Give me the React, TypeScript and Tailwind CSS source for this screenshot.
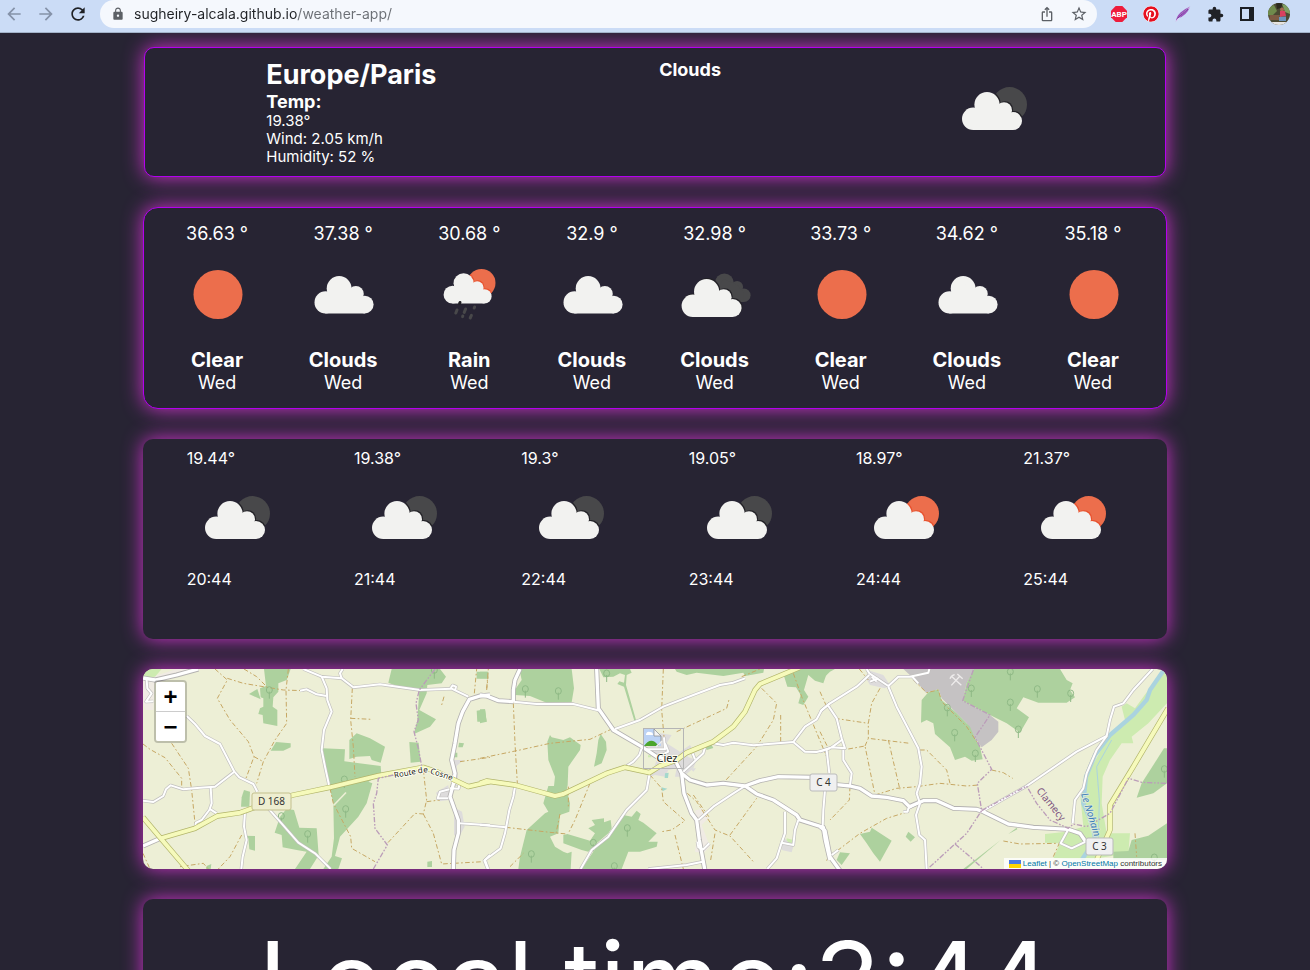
import { type ReactNode } from "react";
import {
  MdArrowBack,
  MdArrowForward,
  MdExtension,
  MdIosShare,
  MdLock,
  MdRefresh,
  MdStarBorder,
} from "react-icons/md";
import { FaPinterest } from "react-icons/fa";

/* ---------- Weather drawings ---------- */

type Sky = "clear" | "few" | "rain" | "broken" | "night" | "day";

function Cloud({ fill = "#f2f2f0" }: { fill?: string }) {
  return (
    <g fill={fill}>
      <circle cx="11.2" cy="26.8" r="11.2" />
      <circle cx="25" cy="12.6" r="12.6" />
      <circle cx="42" cy="18.2" r="8" />
      <circle cx="51" cy="29" r="9" />
      <path d="M11 20 L25 8 L42 15 L51 26 V38 H11Z" />
    </g>
  );
}

function SkyIcon({ sky }: { sky: Sky }) {
  return (
    <svg viewBox="0 0 100 100" className="size-[100px] shrink-0" role="img" aria-label={sky}>
      {sky === "clear" && <circle cx="51" cy="49.5" r="24.5" fill="#ec6e4c" />}
      {sky === "few" && (
        <g transform="translate(21.5 31) scale(.985)">
          <Cloud />
        </g>
      )}
      {(sky === "night" || sky === "day") && (
        <>
          <clipPath id="disc-large">
            <circle cx="65.6" cy="45.5" r="17.4" />
          </clipPath>
          <g clipPath="url(#disc-large)">
            <rect width="100" height="100" fill={sky === "day" ? "#ec6e4c" : "#48484a"} />
            <g transform="translate(19 32)">
              <Cloud fill={sky === "day" ? "#e8502c" : "#222126"} />
            </g>
          </g>
          <g transform="translate(18 33)">
            <Cloud />
          </g>
        </>
      )}
      {sky === "broken" && (
        <>
          <g transform="translate(40.6 28.4) scale(.75)">
            <Cloud fill="#48484a" />
          </g>
          <g transform="translate(17.6 33)">
            <Cloud fill="#222126" />
          </g>
          <path d="M60 56 H74 V74 H60Z" fill="#272433" />
          <g transform="translate(16.6 34)">
            <Cloud />
          </g>
        </>
      )}
      {sky === "rain" && (
        <>
          <clipPath id="disc-small">
            <circle cx="62.5" cy="38" r="14" />
          </clipPath>
          <g clipPath="url(#disc-small)">
            <rect width="100" height="100" fill="#ec6e4c" />
            <g transform="translate(25.4 27.2) scale(.8)">
              <Cloud fill="#e8502c" />
            </g>
          </g>
          <g transform="translate(24.6 28.2) scale(.8)">
            <Cloud />
          </g>
          <g stroke="#48484a" strokeWidth="3" strokeLinecap="round">
            <path d="M41 57.5 L40.6 58.5" stroke="#222126" />
            <path d="M38 65 L36.8 68" />
            <path d="M46.6 64 L45.2 67.4" />
            <path d="M55.6 62 L55.2 63" />
            <path d="M43.8 71 L43.6 71.6" />
            <path d="M52.4 70.4 L51.2 73" />
          </g>
        </>
      )}
    </svg>
  );
}

/* ---------- Map ---------- */

interface Sheet {
  at: string;
  fields: string[];
  grey: string[];
  beige: string[];
  woods: string[];
  tracks: string[];
  lanes: string[];
  roads: string[];
  yellow: string[];
  borders: string[];
  trees: [number, number][];
}

const sheets: Sheet[] = [
  {
    at: "translate(-3 -9) scale(.33333)",
    fields: ["M9 27 L65 27 L45 50 L9 54Z", "M428 30 H445 V50 H428Z"],
    grey: [
      "M888 398 L925 375 L928 420 L898 424Z",
      "M942 442 L966 455 L974 500 L955 534 L942 524Z",
      "M940 300 L970 300 L950 318 L955 370 L935 370Z",
    ],
    beige: ["M9 60 L110 27 L180 27 L110 52 L44 70 L42 110 L40 150 L18 150 L9 130Z"],
    woods: [
      "M372 27 L452 27 L440 60 L415 70 L415 95 L400 112 L398 140 L412 150 L412 198 L370 190 L368 165 L355 162 L360 145 L370 140 L370 115 L362 112 L360 85 L378 78Z",
      "M327 102 L352 87 L362 118Z",
      "M755 27 H900 L918 50 L905 70 L862 75 L860 100 L838 150 L888 178 L870 200 L822 222 L832 180 L838 90 L780 82 L745 68Z",
      "M392 272 L408 246 L452 250 L452 262 L430 272Z",
      "M548 265 L615 268 L613 304 L722 318 L724 345 L685 365 L697 370 L680 430 L655 470 L600 530 L585 588 L606 595 L595 627 L550 627 L575 590 L582 535 L580 430 L568 378Z",
      "M628 240 L650 220 L690 235 L735 260 L722 308 L695 300 L690 288 L650 290 L628 297Z",
      "M808 246 L836 248 L842 305 L812 308Z",
      "M312 390 L330 395 L328 440 L303 440 L305 412Z",
      "M404 518 L420 470 L440 446 L462 450 L478 503 L530 505 L536 586 L510 627 L465 627 L500 575 L470 570 L428 562 L425 525Z",
      "M310 527 L345 528 L345 572 L328 568 L325 535Z",
      "M1010 152 L1035 148 L1040 185 L1012 185Z",
      "M1010 35 H1045 V56 H1010Z",
      "M957 248 L972 250 L968 262 L955 262Z",
      "M940 278h12v14h-12Z",
      "M862 605l14 -2v18h-14Z",
      "M200 618 L214 612 L212 627 H198Z",
    ],
    tracks: [
      "M225 27 L262 60 L232 115 L270 180 L325 245 L342 290 L318 355",
      "M262 55 L310 70 L370 80 L430 90 L490 92",
      "M312 27 L350 50 L385 85",
      "M445 27 L438 90 L440 190 L405 240 L370 305 L350 370",
      "M342 290 L370 305",
      "M637 85 L632 180 L640 260 L645 350",
      "M632 175 L695 178",
      "M95 250 L145 325 L155 390 L165 490",
      "M9 252 L30 268 L75 293 L125 355 L125 385",
      "M570 385 L580 430 L632 530 L635 565 L705 605",
      "M850 330 L860 420 L850 462 L825 460 L742 550",
      "M850 462 L880 520 L905 612 L1030 605",
      "M960 305 L1050 292",
      "M860 425 L900 420",
      "M9 580 L30 627",
      "M305 525 L270 590 L235 627",
      "M120 620 L190 610 L205 627",
      "M1003 100 L1010 27",
      "M1040 90 L1044 50",
      "M912 110 L905 135",
    ],
    lanes: [
      "M140 168 L165 192 L195 228 L240 252 L283 335 L298 352 L340 372 L352 395",
      "M9 422 L40 426 L70 408 L78 388 L92 376 L130 388 L180 383 L225 380 L283 335",
      "M212 383 L215 430 L208 450 L185 480 L168 488 L166 500",
      "M208 446 L230 460",
      "M490 27 L545 50 L605 55 L640 82 L720 73 L840 90 L935 86 L985 110",
      "M605 55 L600 40 L608 27",
      "M545 50 L560 85 L562 120 L575 155 L552 210 L545 270 L555 320 L567 375",
      "M480 92 L500 88 L530 103 L560 108",
      "M932 84 L938 76 L948 80 L945 92",
      "M385 445 L420 485 L475 548 L525 580 L572 627",
      "M315 456 L312 500 L320 540 L308 590 L304 627",
      "M20 60 L22 85 L35 100 L18 125 L40 124",
      "M958 490 L1050 496",
      "M935 365 L958 374 L956 386 L930 385",
      "M928 388 L900 395 L893 415 L925 415",
      "M1050 585 L1033 602 L1043 627",
    ],
    roads: [
      "M1050 105 L1020 108 L988 118 L968 155 L955 190 L945 250 L935 300 L945 340 L942 365 L930 410 L955 480 L955 520 L942 570 L940 627",
      "M9 558 L62 535",
      "M9 54 L45 60 L110 45 L175 27",
    ],
    yellow: [
      "M9 472 L62 535 L145 632",
      "M62 535 L165 505 L232 468 L300 458 L400 422 L460 405 L570 382 L715 347 L850 322 L890 335 L985 380 L1050 365",
    ],
    borders: [
      "M885 27 L838 90 L828 130 L835 180 L822 215 L835 265 L845 318",
      "M760 345 L715 355 L710 400 L700 430 L705 505 L742 555 L700 627",
    ],
    trees: [[388, 90], [613, 358], [617, 447], [424, 468], [503, 522], [883, 30]],
  },
  {
    at: "translate(337 -9) scale(.33333)",
    fields: ["M920 535 L940 540 L936 556 L918 550Z", "M504 286 h10 v6 h-10Z"],
    grey: [
      "M500 262 L535 250 L540 220 L575 225 L560 250 L600 275 L630 255 L637 266 L622 290 L650 300 L640 325 L610 350 L585 350 L590 325 L565 330 L555 350 L525 345 L500 355 L520 330 L530 300Z",
      "M908 520 L918 540 L940 560 L935 577 L905 570Z",
      "M630 325 L648 325 L640 335Z",
    ],
    beige: ["M645 452 L665 445 L685 475 L665 495 L690 560 L670 580 L645 575 L655 500Z"],
    woods: [
      "M118 27 H275 L282 85 L275 127 L200 128 L150 108 L105 105 L108 85 L125 60Z",
      "M358 27 L450 27 L455 38 L440 45 L438 75 L468 180 L463 182 L432 80 L412 72 L418 64 L432 68 L435 45 L420 40 L400 50 L370 52Z",
      "M0 35h22v20h-22Z",
      "M0 148 L15 148 L20 185 L0 190Z",
      "M585 27 L590 35 L620 45 L650 38 L730 48 L790 38 L795 48 L850 38 L852 27Z",
      "M930 27 L1045 27 L1030 70 L1005 62 L985 45 L972 90 L985 110 L970 135 L955 130 L962 105 L948 82 L922 80 L912 48Z",
      "M210 225 L215 232 L250 240 L270 232 L302 255 L300 270 L265 320 L263 375 L260 390 L270 430 L268 455 L240 465 L235 520 L210 530 L225 560 L250 575 L262 580 L275 575 L272 627 L115 627 L120 590 L140 510 L195 460 L205 455 L190 430 L205 378 L222 378 L225 350 L205 300 L202 245Z",
      "M362 222 L378 245 L380 270 L365 310 L342 320 L350 280 L355 240Z",
      "M250 525 L262 522 L330 542 L345 520 L325 505 L345 495 L335 480 L372 475 L372 487 L392 480 L395 505 L385 520 L350 550 L325 575 L305 570 L250 550Z",
      "M400 500 L430 465 L455 470 L470 452 L482 462 L475 480 L490 488 L530 520 L505 545 L533 545 L530 560 L480 575 L445 575 L425 627 L305 627 L350 560 L390 525Z",
      "M675 258 L695 255 L700 264 L680 270Z",
    ],
    tracks: [
      "M100 130 L105 250 L112 370",
      "M0 295 L120 270 L210 250 L330 238 L395 207",
      "M550 27 L545 150 L552 230",
      "M590 215 L740 145 L748 115",
      "M330 370 L285 480 L265 520",
      "M78 502 L210 517 L260 522",
      "M510 345 L545 385 L550 425 L615 482 L575 510 L545 515",
      "M622 400 L650 425 L705 510 L750 528 L820 605",
      "M640 405 L690 475",
      "M750 525 L830 415",
      "M845 85 L890 130 L880 180 L830 260 L738 360",
      "M902 165 V245",
      "M940 40 L965 110 L1040 290",
      "M20 85 L25 27",
      "M265 380 L265 440",
      "M240 462 L228 520",
      "M585 525 L610 627",
      "M692 600 L705 520",
      "M785 50 L840 27",
      "M90 620 L130 580",
    ],
    lanes: [
      "M100 125 L170 132 L280 132 L360 152",
      "M405 207 L480 180 L550 140 L640 105 L720 75 L760 68 L795 55",
      "M105 380 L100 410 L88 450 L75 520 L62 565 L15 600 L25 627",
      "M0 494 L78 502",
      "M485 265 L478 285 L460 305 L440 318",
      "M508 345 L500 390 L440 450 L385 530 L335 570 L302 627",
      "M795 378 L760 400 L700 440 L655 480",
      "M700 250 L730 255 L760 248 L820 256 L940 246 L975 275 L1010 276 L1050 265",
      "M940 246 L975 200 L1010 178 L1025 150 L1050 130",
      "M915 455 L915 520 L905 548 L940 555 L945 510 L955 480",
      "M905 548 L890 595 L862 627",
      "M505 627 L620 615 L668 605",
      "M652 545 L655 562 L670 568 L688 550",
      "M675 262 L670 280 L610 335",
      "M638 280 L645 298",
      "M500 268 L555 268 L552 232",
      "M535 290 L565 275 L555 250",
    ],
    roads: [
      "M0 105 L20 108 L55 122 L100 125",
      "M100 125 L100 90 L105 60 L120 27",
      "M350 27 L355 145 L400 210 L485 260 L530 290 L585 305",
      "M605 340 L630 360 L680 375 L730 370 L795 378 L840 362 L895 350 L1000 352",
      "M795 378 L830 402 L880 420 L950 465 L960 480 L1030 502 L1036 540 L1050 600",
      "M585 300 L605 340 L612 400 L635 460 L650 480 L658 540 L675 632",
    ],
    yellow: [
      "M0 370 L20 363 L105 375 L225 408 L250 402 L380 340 L435 322 L508 338 L540 318 L590 300 L620 278 L700 245 L760 200 L795 155 L825 90 L840 72 L960 22",
    ],
    borders: [],
    trees: [[136, 87], [235, 93], [380, 40], [442, 504], [340, 548], [154, 582], [403, 618]],
  },
  {
    at: "translate(677 -9) scale(.33333)",
    fields: [
      "M1041 27 L1041 130 L985 190 L935 230 L940 250 L905 250 L870 300 L848 350 L845 430 L860 520 L930 520 L925 580 L800 600 L700 595 L720 550 L675 548 L675 522 L740 515 L790 500 L780 400 L815 320 L860 240 L915 180 L905 140 L920 130 L945 145 L1000 70 L1030 27Z",
    ],
    grey: ["M135 50 L150 32 L190 45 L210 75 L195 85 L150 75Z"],
    beige: [],
    woods: [
      "M0 27 H45 L30 35 L10 55 L0 62Z",
      "M462 27 L720 27 L740 60 L758 70 L750 90 L765 112 L740 128 L655 128 L610 112 L590 145 L627 172 L600 218 L560 190 L510 165 L428 122 L440 70Z",
      "M325 97 L355 88 L365 120 L410 160 L450 200 L465 235 L480 260 L488 298 L455 302 L435 290 L405 300 L390 262 L345 222 L340 190 L320 180 L303 188 L305 120Z",
      "M120 522 L150 515 L155 503 L215 542 L180 605 L160 580 L140 550Z",
      "M265 515 L285 532 L272 545 L257 530Z",
      "M60 577 L90 580 L65 615 L50 600Z",
      "M1032 265 L1041 265 L1041 370 L1000 400 L950 413 L965 370Z",
      "M935 540 L985 527 L1041 490 L1041 600 L880 598 L880 575 L925 573Z",
      "M565 522 L590 503 L592 508Z",
      "M430 627 L542 540 L440 627Z",
    ],
    tracks: [
      "M180 85 L155 130 L145 190 L145 235 L270 250",
      "M45 175 L145 190",
      "M85 267 L135 258 L165 405",
      "M135 258 L145 235",
      "M205 240 L240 390",
      "M165 405 L230 385 L290 380 L360 370 L440 378 L475 375",
      "M300 270 L320 270 L380 330 L390 370",
      "M515 330 L550 338 L578 355",
      "M90 380 L88 420 L30 480",
      "M265 455 L200 475 L120 520 L35 585 L15 605",
      "M550 543 L600 552 L715 550",
      "M118 27 L145 60",
      "M280 60 L320 98 L355 90 L365 125 L440 200 L470 245",
      "M945 520 L950 590",
      "M0 95 L20 140",
      "M0 215 L25 265",
      "M700 590 L720 545",
    ],
    lanes: [
      "M0 155 L30 130 L110 80 L148 45",
      "M140 27 L148 40 L205 78 L235 50 L270 50 L325 38 L328 27",
      "M150 65 L175 55 M155 50 L170 65",
      "M205 80 L230 140 L295 265 L305 320 L300 370 L290 400 L300 430 L288 465 L298 525 L315 540 L320 627",
      "M275 48 L295 70",
      "M25 138 L50 175 L65 235 L75 265 L35 262 L0 275",
      "M65 240 L35 262",
      "M70 270 L70 300 L95 340 L90 375",
      "M20 270 L28 340",
      "M15 390 L10 450 L8 500",
      "M490 452 L620 378 L770 275 L860 228 L870 180 L882 140 L910 130 L940 90 L998 27",
      "M860 228 L830 270 L800 340 L790 385 L765 420 L758 490",
      "M745 508 L722 550 L755 565 L797 545",
      "M300 425 L265 445 L263 455 L250 455",
      "M55 570 L35 585",
    ],
    roads: [
      "M50 374 L90 378 L120 385 L155 408 L200 412 L250 422 L268 440 L310 422 L350 422 L400 445 L470 448 L490 455 L565 492 L640 502 L745 508 L780 520 L797 545",
      "M0 500 L15 512 L30 590 L60 632",
    ],
    yellow: ["M1044 145 L940 320 L870 435 L870 510 L830 600"],
    borders: [
      "M460 30 L428 122 L510 165 L465 232 L515 328 L472 370 L485 452 L440 520 L405 552 L325 625",
      "M405 552 L450 590 L490 627",
      "M485 452 L620 378 L650 430 L690 480 L745 505 L760 492 L800 500 L870 460 L925 355 L965 367 L1041 370",
    ],
    trees: [
      [454, 85], [571, 127], [652, 87], [571, 35], [404, 218], [466, 280],
      [382, 143], [1033, 327], [1003, 592], [595, 208], [752, 100],
    ],
  },
];

type Layer = "fields" | "grey" | "beige" | "woods" | "tracks" | "lanes" | "roads" | "yellow" | "borders";

function Areas({ layer, fill }: { layer: Layer; fill: string }) {
  return (
    <>
      {sheets.map((s) => (
        <g key={s.at} transform={s.at} fill={fill}>
          {s[layer].map((d) => (
            <path key={d} d={d} />
          ))}
        </g>
      ))}
    </>
  );
}

function Lines({ layer, color, width, dash }: { layer: Layer; color: string; width: number; dash?: string }) {
  return (
    <>
      {sheets.map((s) => (
        <g key={s.at} transform={s.at} fill="none" stroke={color} strokeWidth={width} strokeLinejoin="round" strokeDasharray={dash}>
          {s[layer].map((d) => (
            <path key={d} d={d} />
          ))}
        </g>
      ))}
    </>
  );
}

function Shield({ x, y, w, label, fill, stroke }: { x: number; y: number; w: number; label: string; fill: string; stroke: string }) {
  return (
    <g>
      <rect x={x} y={y} width={w} height="17" rx="2" fill={fill} stroke={stroke} />
      <text x={x + w / 2} y={y + 12} textAnchor="middle" fontSize="10" fill="#333">
        {label}
      </text>
    </g>
  );
}

function MapDrawing() {
  return (
    <svg
      viewBox="0 0 1024 200"
      preserveAspectRatio="xMidYMid slice"
      className="block h-[200px] w-full font-['Noto_Sans',sans-serif]"
      role="img"
      aria-label="Map of Ciez"
    >
      <rect width="1024" height="200" fill="#edefd6" />
      <Areas layer="beige" fill="#f0ebe4" />
      <Areas layer="fields" fill="#cdebb0" />
      <Areas layer="grey" fill="#dedcdc" />
      <path
        transform="translate(677 -9) scale(.33333)"
        d="M250 27 H465 L440 70 L428 122 L510 165 L535 185 L535 215 L515 240 L485 262 L465 235 L440 190 L400 150 L365 115 L355 88 L318 98 L280 55Z"
        fill="#c5c2c3"
      />
      <Areas layer="woods" fill="#add19e" />
      <g transform="translate(677 -9) scale(.33333)" fill="none" stroke="#aad3df">
        <path d="M1030 32 L990 90 L980 120 L940 165 L870 225 L825 285 L798 350 L790 430 L820 500 L825 540 L785 600" strokeWidth="13" />
        <path d="M875 240 L830 320 L838 420 L835 540" strokeWidth="3" />
      </g>
      <g transform="translate(337 -9) scale(.33333)" fill="#a4d8cc">
        <path d="M555 340 L566 338 L564 354 L554 354Z" />
        <path d="M544 382 L562 386 L548 394Z" />
      </g>
      <Lines layer="tracks" color="#c6a763" width={3} dash="14 7 5 7" />
      {sheets.map((s) => (
        <g key={s.at} transform={s.at} fill="none" stroke="#8fb986" strokeWidth="3">
          {s.trees.map(([x, y]) => (
            <g key={`${x}-${y}`}>
              <ellipse cx={x} cy={y} rx="9" ry="10" />
              <path d={`M${x} ${y + 5}v21`} />
            </g>
          ))}
        </g>
      ))}
      <g transform="translate(677 -9) scale(.33333)" stroke="#eeecec" strokeWidth="4" fill="none">
        <path d="M394 76 L420 48 M396 50 L424 76 M412 42 L428 56 M390 56 Q394 46 404 44" />
      </g>
      <path d="M190.5 136.5 L203 123.5" stroke="#edefd6" strokeWidth="1.6" />
      <Lines layer="lanes" color="#c2c0bf" width={10} />
      <Lines layer="roads" color="#b4b2b1" width={15} />
      <Lines layer="lanes" color="#ffffff" width={6} />
      <Lines layer="roads" color="#ffffff" width={10} />
      <Lines layer="yellow" color="#b2b56b" width={16} />
      <Lines layer="yellow" color="#f6fabb" width={12} />
      <Lines layer="borders" color="#bb9db9" width={4} dash="16 5 5 5 5 5" />

      <path id="route" d="M251.5 109 L280 103.5 Q283 103 286 104 L310 112" fill="none" />
      <g fill="#222" stroke="#fdfdf0" strokeWidth="2" paintOrder="stroke" strokeLinejoin="round">
        <text fontSize="8">
          <textPath href="#route">Route de Cosne</textPath>
        </text>
        <text x="524" y="93" textAnchor="middle" fontSize="11">
          Ciez
        </text>
        <text transform="translate(893 122) rotate(51)" fontSize="10" fill="#7d5580" stroke="#edefd6">
          Clamecy
        </text>
        <text transform="translate(938 125) rotate(73)" fontSize="10" fontStyle="italic" fill="#3b7cba" stroke="#dcebd8">
          Le Nohain
        </text>
      </g>
      <Shield x={109} y={124} w={39} label="D 168" fill="#eeeed0" stroke="#c3c08d" />
      <Shield x={667} y={105} w={27} label="C 4" fill="#f0f0f0" stroke="#bbb" />
      <Shield x={943} y={169} w={27} label="C 3" fill="#f0f0f0" stroke="#bbb" />

      <g>
        <rect x="500.5" y="59.5" width="40" height="40" fill="none" stroke="#b5b5b5" />
        <path d="M501 60 H511 L518 67 V77 H501Z" fill="#bcd3f5" />
        <path d="M503 65 q1 -3 4 -2 q3 0 3 3 h-7Z" fill="#fff" />
        <path d="M501 77 Q508 67 515 76 L516 77Z" fill="#4ba52c" />
        <path d="M518 67 V73 L513 77" fill="none" stroke="#8b8b8b" strokeWidth=".8" />
        <path d="M511 60 L518 67 H511Z" fill="#f4f4f4" stroke="#8b8b8b" strokeWidth=".7" />
        <path d="M513 78 L519 72" stroke="#eee" strokeWidth="1.5" />
      </g>
    </svg>
  );
}

/* ---------- Browser toolbar ---------- */

function ToolButton({ label, children }: { label: string; children: ReactNode }) {
  return (
    <button type="button" aria-label={label} className="flex w-8 items-center justify-center">
      {children}
    </button>
  );
}

function Toolbar() {
  return (
    <header className="relative z-10 flex h-[33px] shrink-0 items-start border-b border-[#a3b3c9] bg-[#cbdcf6] pr-[15px]">
      <nav className="-ml-0.5 flex h-7 w-[102px] shrink-0 items-center text-lg text-[#8592a8]">
        <ToolButton label="Back">
          <MdArrowBack className="size-5" />
        </ToolButton>
        <ToolButton label="Forward">
          <MdArrowForward className="size-5" />
        </ToolButton>
        <ToolButton label="Reload">
          <MdRefresh className="size-5 text-[#1f2125]" />
        </ToolButton>
      </nav>
      <div className="flex h-7 min-w-0 flex-1 items-center rounded-full bg-[#f5f8fd] pr-0.5 pl-[11px] text-[#5c6066]">
        <MdLock className="mr-[9px] size-3.5 shrink-0" />
        <input
          aria-label="Address"
          defaultValue="sugheiry-alcala.github.io/weather-app/"
          className="min-w-0 flex-1 bg-linear-[90deg,#202226_163px,#6b6f75_163px] bg-clip-text font-['Inter',sans-serif] text-sm text-transparent outline-none"
        />
        <ToolButton label="Share">
          <MdIosShare className="size-4" />
        </ToolButton>
        <ToolButton label="Bookmark this page">
          <MdStarBorder className="size-[18px]" />
        </ToolButton>
      </div>
      <div className="ml-1.5 flex h-7 shrink-0 items-center">
        <ToolButton label="Adblock Plus">
          <svg viewBox="0 0 16 16" className="size-4">
            <path d="M4.7 0 H11.3 L16 4.7 V11.3 L11.3 16 H4.7 L0 11.3 V4.7Z" fill="#ee1c3c" />
            <text x="8" y="10.9" textAnchor="middle" fontSize="8" fontWeight="700" fill="#fff" className="font-['Roboto',sans-serif]">
              ABP
            </text>
          </svg>
        </ToolButton>
        <ToolButton label="Pinterest">
          <FaPinterest className="size-4 rounded-full bg-white text-[#e60f1e]" />
        </ToolButton>
        <ToolButton label="Feather">
          <svg viewBox="0 0 16 16" className="size-4">
            <path d="M.8 15.5 Q1.4 10.5 5.5 6.5 Q9.5 3 15.2 .6 Q13.6 5 10.3 8 Q7 11.4 3 12.2Z" fill="#9a55bb" />
            <path d="M1 15.5 Q5 8 15 1" fill="none" stroke="#e4cbf0" strokeWidth=".8" />
            <path d="M2.5 12.5 Q7 7.5 13 3" fill="none" stroke="#6b2f91" strokeWidth=".8" />
          </svg>
        </ToolButton>
        <ToolButton label="Extensions">
          <MdExtension className="size-[17px] text-[#202226]" />
        </ToolButton>
        <ToolButton label="Side panel">
          <svg viewBox="0 0 14 14" className="size-3.5">
            <path fillRule="evenodd" d="M0 0 H14 V14 H0Z M2 2 V12 H9 V2Z" fill="#1c1f24" />
          </svg>
        </ToolButton>
        <ToolButton label="Profile">
          <svg viewBox="0 0 22 22" className="size-[22px]">
            <clipPath id="face">
              <circle cx="11" cy="11" r="11" />
            </clipPath>
            <g clipPath="url(#face)">
              <rect width="22" height="22" fill="#4b4a33" />
              <path d="M0 4 L6 2 L9 8 L4 13 L0 12Z" fill="#6f8b4c" />
              <path d="M8 0 L15 0 L13 5 L9 6Z" fill="#2c2a1d" />
              <path d="M14 1 L22 3 V11 L17 9Z" fill="#7f9f62" />
              <path d="M2 12 H12 L11 17 H1Z" fill="#7d5b43" />
              <circle cx="14" cy="6.5" r="2" fill="#a56a52" />
              <path d="M12 8 L17 8 L18 13 L12 14Z" fill="#d8405f" />
              <path d="M11 14 L18 13.5 L18 18 L11 18Z" fill="#6c93bd" />
              <path d="M0 19 H22 V22 H0Z" fill="#e6e4e2" />
            </g>
          </svg>
        </ToolButton>
      </div>
    </header>
  );
}

/* ---------- Page ---------- */

const daily: { temp: string; sky: Sky; name: string; grow: string }[] = [
  { temp: "36.63 °", sky: "clear", name: "Clear", grow: "flex-[126_1_0%]" },
  { temp: "37.38 °", sky: "few", name: "Clouds", grow: "flex-[126_1_0%]" },
  { temp: "30.68 °", sky: "rain", name: "Rain", grow: "flex-[126_1_0%]" },
  { temp: "32.9 °", sky: "few", name: "Clouds", grow: "flex-[119_1_0%]" },
  { temp: "32.98 °", sky: "broken", name: "Clouds", grow: "flex-[126_1_0%]" },
  { temp: "33.73 °", sky: "clear", name: "Clear", grow: "flex-[126_1_0%]" },
  { temp: "34.62 °", sky: "few", name: "Clouds", grow: "flex-[126_1_0%]" },
  { temp: "35.18 °", sky: "clear", name: "Clear", grow: "flex-[126_1_0%]" },
];

const hourly: { temp: string; sky: Sky; time: string }[] = [
  { temp: "19.44°", sky: "night", time: "20:44" },
  { temp: "19.38°", sky: "night", time: "21:44" },
  { temp: "19.3°", sky: "night", time: "22:44" },
  { temp: "19.05°", sky: "night", time: "23:44" },
  { temp: "18.97°", sky: "day", time: "24:44" },
  { temp: "21.37°", sky: "day", time: "25:44" },
];

export default function App() {
  return (
    <div className="flex h-screen flex-col bg-[#272433] font-['Inter',sans-serif] text-white">
      <Toolbar />
      <main className="flex min-h-0 flex-1 flex-col items-center gap-[30px] overflow-y-auto px-4 pt-3.5 pb-8 [scrollbar-width:none]">
        <section className="flex min-h-[130px] w-full max-w-[1022px] shrink-0 items-start justify-around rounded-[10px] border border-[#b400f0] bg-[#272433] px-2.5 pt-[11px] shadow-[0_0_20px_#cf32cd]">
          <div className="text-[15px] leading-[18px]">
            <h1 className="text-[27px] leading-8 font-bold">Europe/Paris</h1>
            <h2 className="text-lg leading-[21px] font-bold">Temp:</h2>
            <p>19.38°</p>
            <p>Wind: 2.05 km/h</p>
            <p>Humidity: 52 %</p>
          </div>
          <h2 className="text-lg leading-[22px] font-bold">Clouds</h2>
          <SkyIcon sky="night" />
        </section>

        <section className="flex min-h-[202px] w-full max-w-[1024px] shrink-0 rounded-[15px] border border-[#b400f0] bg-[#272433] px-2.5 pt-[15px] shadow-[0_0_20px_#cf32cd]">
          {daily.map((d) => (
            <article key={d.temp} className={`flex flex-col items-center text-lg leading-[22px] ${d.grow}`}>
              <p>{d.temp}</p>
              <SkyIcon sky={d.sky} />
              <h3 className="mt-1 text-xl leading-[23px] font-bold">{d.name}</h3>
              <p>Wed</p>
            </article>
          ))}
        </section>

        <section className="grid min-h-[200px] w-full max-w-[1024px] shrink-0 grid-cols-6 justify-items-center rounded-[10px] bg-[#272433] px-2.5 pt-2.5 shadow-[0_0_20px_#cf32cd]">
          {hourly.map((h) => (
            <article key={h.time} className="text-base leading-[19px]">
              <p>{h.temp}</p>
              <SkyIcon sky={h.sky} />
              <p className="mt-0.5">{h.time}</p>
            </article>
          ))}
        </section>

        <section className="w-full max-w-[1024px] shrink-0 rounded-[10px] shadow-[0_0_20px_#cf32cd]">
          <div className="relative overflow-hidden rounded-[10px]">
            <MapDrawing />
            <div className="absolute top-[11px] left-[11px] flex w-[33px] flex-col overflow-hidden rounded border-2 border-black/20 bg-clip-padding font-['Liberation_Sans',sans-serif] text-2xl font-bold text-black">
              <button type="button" aria-label="Zoom in" className="h-[30px] border-b border-[#ccc] bg-white leading-[30px]">
                +
              </button>
              <button type="button" aria-label="Zoom out" className="h-[29px] bg-white leading-[30px]">
                −
              </button>
            </div>
            <div className="absolute right-0 bottom-0 flex h-[11px] items-center gap-0.5 bg-white/80 px-[5px] font-['Liberation_Sans',sans-serif] text-[8px] leading-[11px] whitespace-pre text-[#333]">
              <svg viewBox="0 0 12 8" className="h-2 w-3">
                <rect width="12" height="4" fill="#4c7be1" />
                <rect y="4" width="12" height="4" fill="#ffd500" />
              </svg>
              <p>
                <a href="https://leafletjs.com" className="text-[#0078a8]">
                  Leaflet
                </a>
                {" | © "}
                <a href="https://www.openstreetmap.org/copyright" className="text-[#0078a8]">
                  OpenStreetMap
                </a>
                {" contributors"}
              </p>
            </div>
          </div>
        </section>

        <section className="flex min-h-[200px] w-full max-w-[1024px] shrink-0 items-start justify-center rounded-[10px] bg-[#272433] pt-4 shadow-[0_0_20px_#cf32cd]">
          <p className="text-[108px] leading-[132px] whitespace-nowrap">Local time:3:44</p>
        </section>
      </main>
    </div>
  );
}
